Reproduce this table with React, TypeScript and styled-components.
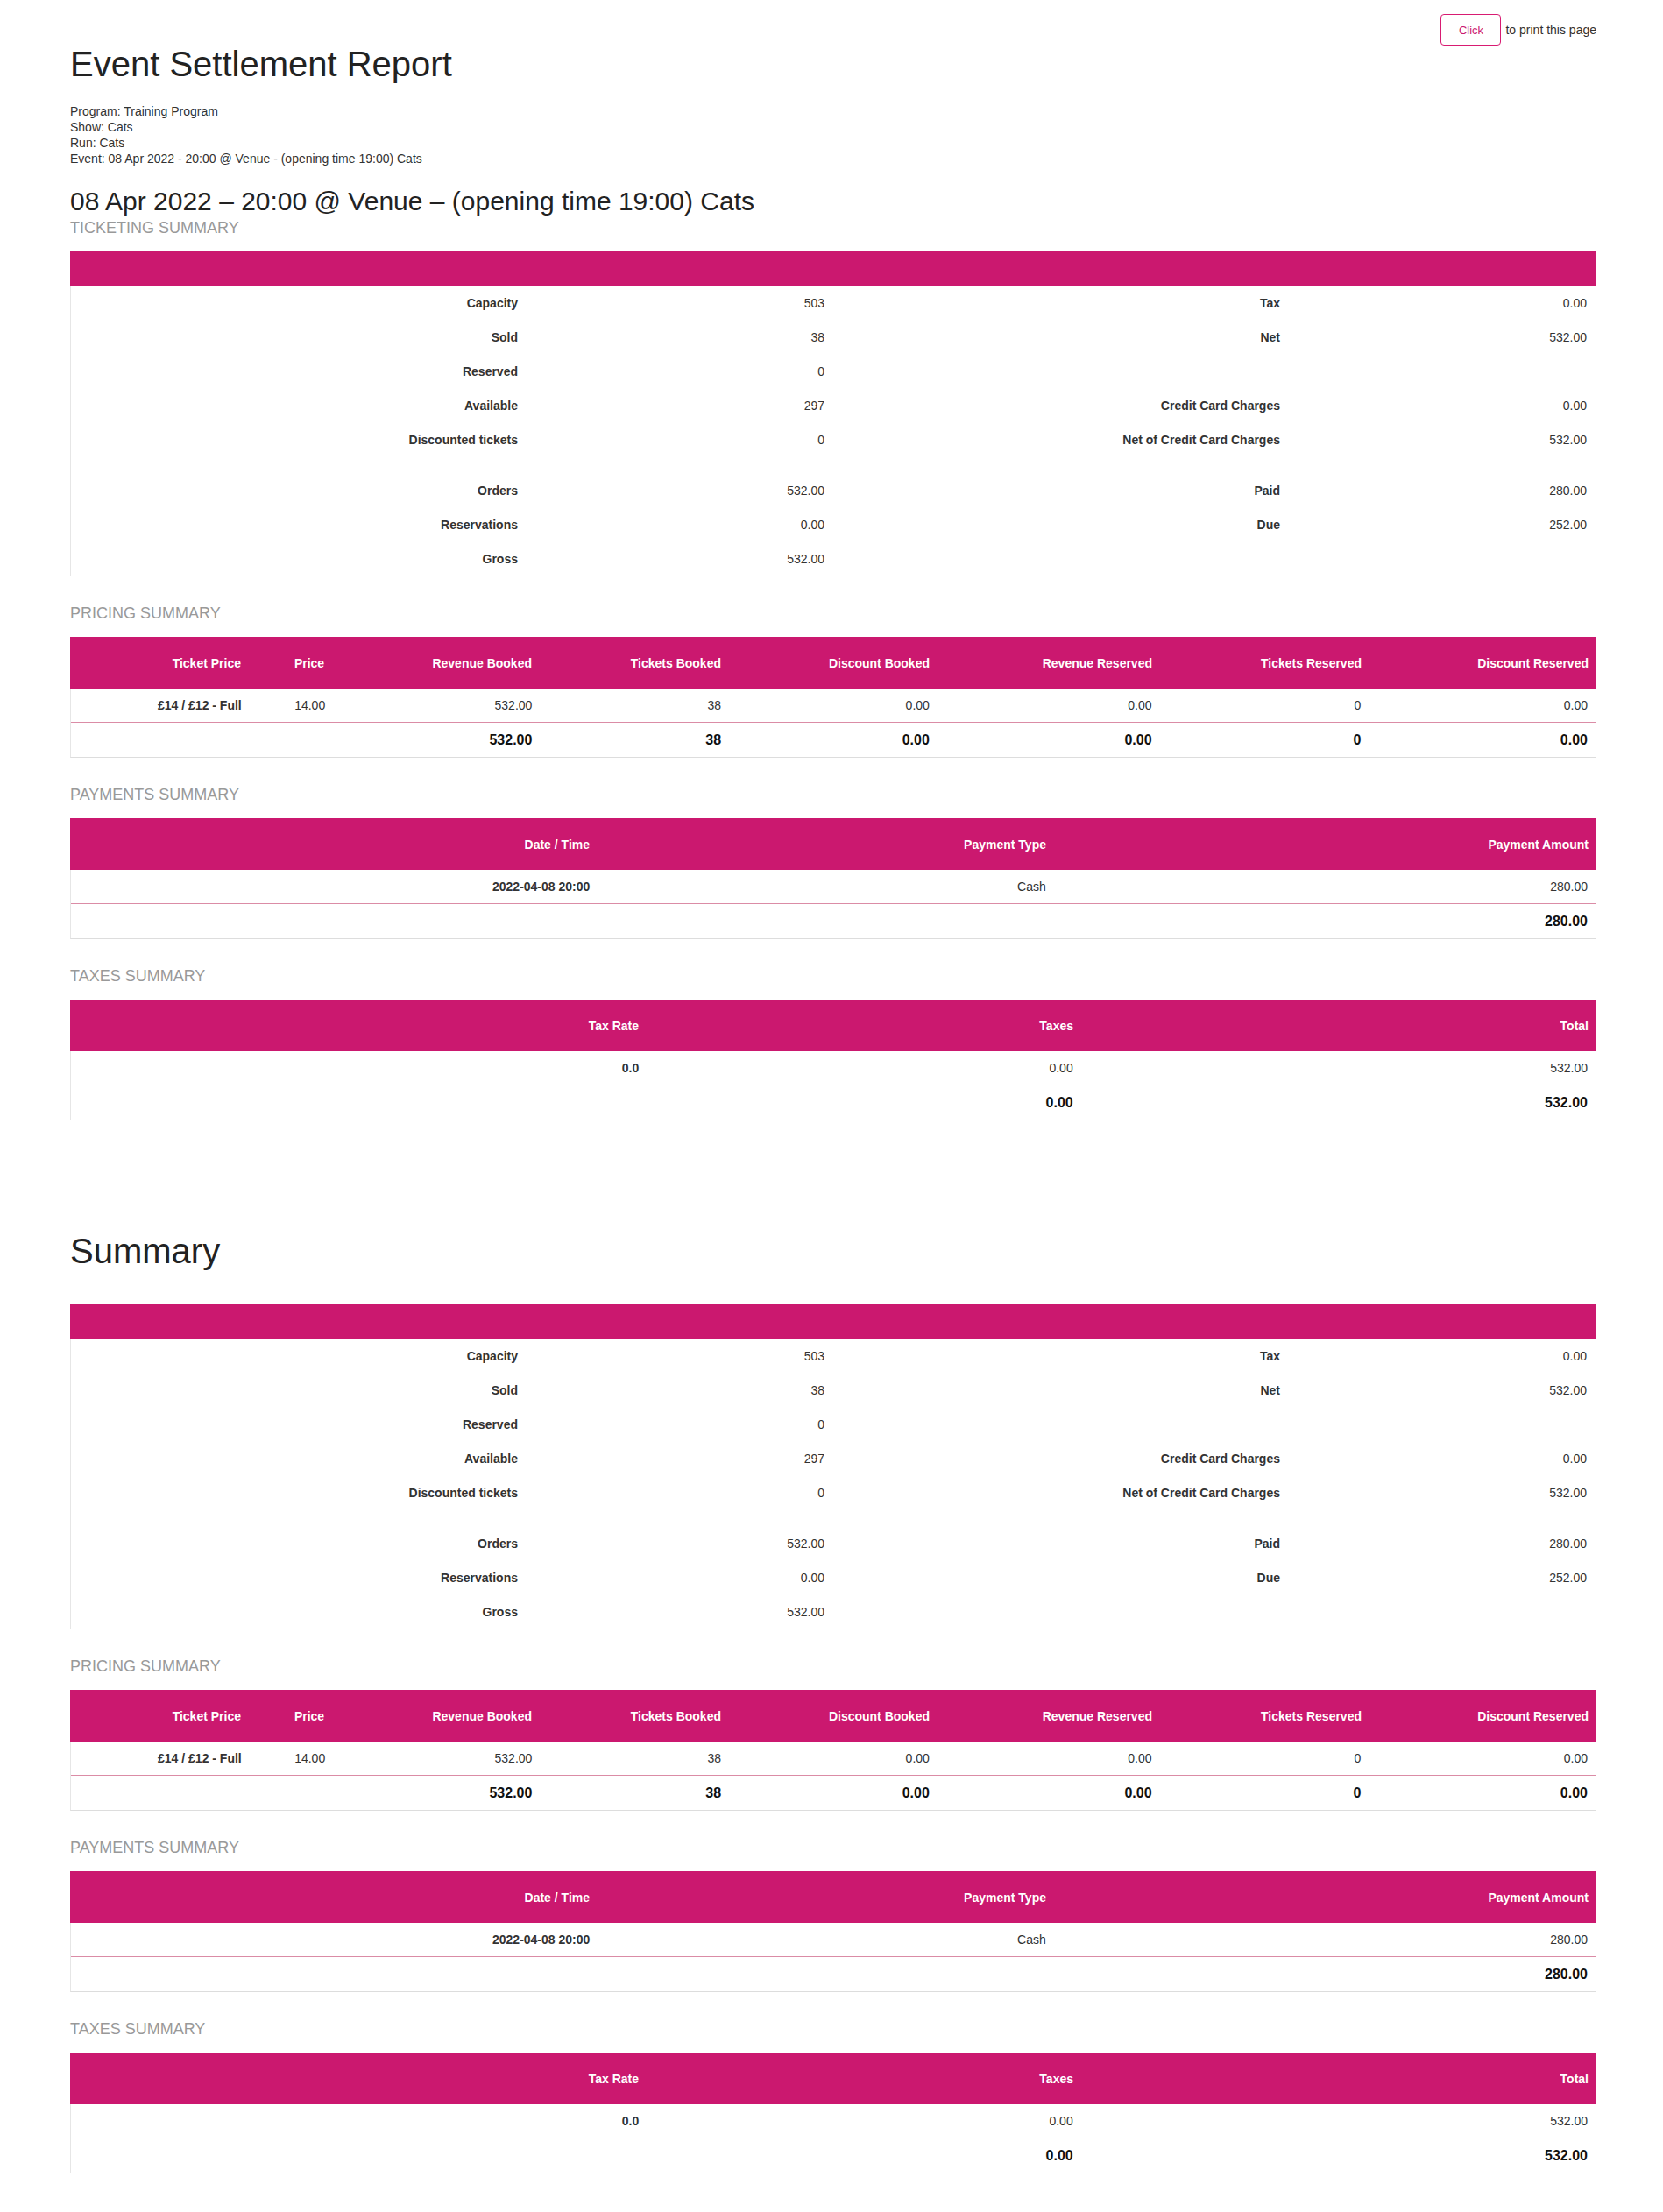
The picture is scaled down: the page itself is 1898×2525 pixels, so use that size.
import React from 'react';
import styled, { createGlobalStyle } from 'styled-components';

const PINK = '#cb186f';

const GlobalStyle = createGlobalStyle`
  html, body { margin: 0; padding: 0; background: #fff; }
  body {
    font-family: "Liberation Sans", Arial, Helvetica, sans-serif;
    color: #333;
    font-size: 14px;
  }
  * { box-sizing: border-box; }
`;

const Page = styled.main`
  width: 1742px;
  margin-left: 80px;
  padding: 16px 0 46px;
`;

const PrintBar = styled.div`
  display: flex;
  justify-content: flex-end;
  align-items: center;
  gap: 5px;
  height: 36px;
`;

const PrintButton = styled.button`
  width: 69px;
  height: 36px;
  border: 1px solid #d81b72;
  border-radius: 4px;
  background: #fff;
  color: ${PINK};
  font-family: inherit;
  font-size: 13px;
  padding: 0;
  cursor: pointer;
`;

const PrintNote = styled.span`
  font-size: 14px;
  color: #333;
`;

const Title = styled.h1<{ $spaced?: boolean }>`
  margin: ${(p) => (p.$spaced ? '128px 0 39px' : '0')};
  font-size: 40px;
  line-height: 42px;
  font-weight: 400;
  color: #222;
`;

const Meta = styled.div`
  margin-top: 24px;
  font-size: 14px;
  line-height: 18px;
  color: #333;
`;

const EventHeading = styled.h2`
  margin: 23px 0 0;
  font-size: 30px;
  line-height: 33px;
  font-weight: 400;
  color: #222;
`;

const SectionLabel = styled.h3<{ $first?: boolean }>`
  margin: ${(p) => (p.$first ? '4px 0 16px' : '32px 0 17px')};
  font-size: 18px;
  line-height: 20px;
  font-weight: 400;
  color: #999;
  text-transform: uppercase;
`;

/* Ticketing summary */
const StatsBar = styled.div`
  height: 40px;
  background: ${PINK};
`;

const StatsBody = styled.div`
  border: 1px solid #e6e6e6;
  border-top: none;
  border-bottom-color: #dddddd;
`;

const StatRow = styled.div<{ $gap?: boolean }>`
  display: grid;
  grid-template-columns: 3fr 2fr 3fr 2fr;
  align-items: center;
  height: ${(p) => (p.$gap ? '19px' : '39px')};
`;

const StatCell = styled.div<{ $label?: boolean }>`
  text-align: right;
  padding-right: ${(p) => (p.$label ? '12px' : '10px')};
  font-size: 14px;
  font-weight: ${(p) => (p.$label ? 700 : 400)};
  color: #333;
`;

/* Generic data tables */
const HeaderRow = styled.div<{ $cols: string }>`
  display: grid;
  grid-template-columns: ${(p) => p.$cols};
  align-items: center;
  height: 59px;
  background: ${PINK};
  color: #fff;
  font-size: 14px;
  font-weight: 700;
`;

const TableBody = styled.div`
  border: 1px solid #e6e6e6;
  border-top: none;
  border-bottom-color: #dddddd;
`;

const DataRow = styled.div<{ $cols: string }>`
  display: grid;
  grid-template-columns: ${(p) => p.$cols};
  align-items: center;
  height: 39px;
  border-bottom: 1px solid #db8ca6;
  font-size: 14px;
  color: #333;
`;

const TotalRow = styled.div<{ $cols: string }>`
  display: grid;
  grid-template-columns: ${(p) => p.$cols};
  align-items: center;
  height: 39px;
  font-size: 16px;
  font-weight: 700;
  color: #111;
`;

type Align = 'left' | 'right' | 'center';

const Cell = styled.div<{ $align: Align; $strong?: boolean }>`
  text-align: ${(p) => p.$align};
  padding: 0 9px;
  white-space: nowrap;
  font-weight: ${(p) => (p.$strong ? 700 : 'inherit')};
`;

interface TableSpec {
  label: string;
  cols: string;
  align: Align[];
  head: string[];
  row: string[];
  total: string[];
}

const tables: TableSpec[] = [
  {
    label: 'Pricing Summary',
    cols: '204fr 138fr 194fr 216fr 238fr 254fr 239fr 259fr',
    align: ['right', 'center', 'right', 'right', 'right', 'right', 'right', 'right'],
    head: [
      'Ticket Price',
      'Price',
      'Revenue Booked',
      'Tickets Booked',
      'Discount Booked',
      'Revenue Reserved',
      'Tickets Reserved',
      'Discount Reserved',
    ],
    row: ['£14 / £12 - Full', '14.00', '532.00', '38', '0.00', '0.00', '0', '0.00'],
    total: ['', '', '532.00', '38', '0.00', '0.00', '0', '0.00'],
  },
  {
    label: 'Payments Summary',
    cols: '602fr 521fr 619fr',
    align: ['right', 'right', 'right'],
    head: ['Date / Time', 'Payment Type', 'Payment Amount'],
    row: ['2022-04-08 20:00', 'Cash', '280.00'],
    total: ['', '', '280.00'],
  },
  {
    label: 'Taxes Summary',
    cols: '658fr 496fr 588fr',
    align: ['right', 'right', 'right'],
    head: ['Tax Rate', 'Taxes', 'Total'],
    row: ['0.0', '0.00', '532.00'],
    total: ['', '0.00', '532.00'],
  },
];

type Stat = [string, string] | null;
type StatLine = { left: Stat; right: Stat } | 'gap';

const stats: StatLine[] = [
  { left: ['Capacity', '503'], right: ['Tax', '0.00'] },
  { left: ['Sold', '38'], right: ['Net', '532.00'] },
  { left: ['Reserved', '0'], right: null },
  { left: ['Available', '297'], right: ['Credit Card Charges', '0.00'] },
  { left: ['Discounted tickets', '0'], right: ['Net of Credit Card Charges', '532.00'] },
  'gap',
  { left: ['Orders', '532.00'], right: ['Paid', '280.00'] },
  { left: ['Reservations', '0.00'], right: ['Due', '252.00'] },
  { left: ['Gross', '532.00'], right: null },
];

function StatPair({ stat }: { stat: Stat }) {
  return (
    <>
      <StatCell $label>{stat ? stat[0] : ''}</StatCell>
      <StatCell>{stat ? stat[1] : ''}</StatCell>
    </>
  );
}

function TicketingSummary() {
  return (
    <div>
      <StatsBar />
      <StatsBody>
        {stats.map((line, i) =>
          line === 'gap' ? (
            <StatRow key={i} $gap />
          ) : (
            <StatRow key={i}>
              <StatPair stat={line.left} />
              <StatPair stat={line.right} />
            </StatRow>
          )
        )}
      </StatsBody>
    </div>
  );
}

function SummaryTable({ spec }: { spec: TableSpec }) {
  return (
    <>
      <SectionLabel>{spec.label}</SectionLabel>
      <div>
        <HeaderRow $cols={spec.cols}>
          {spec.head.map((h, i) => (
            <Cell key={i} $align={spec.align[i]}>
              {h}
            </Cell>
          ))}
        </HeaderRow>
        <TableBody>
          <DataRow $cols={spec.cols}>
            {spec.row.map((c, i) => (
              <Cell key={i} $align={spec.align[i]} $strong={i === 0}>
                {c}
              </Cell>
            ))}
          </DataRow>
          <TotalRow $cols={spec.cols}>
            {spec.total.map((c, i) => (
              <Cell key={i} $align={spec.align[i]}>
                {c}
              </Cell>
            ))}
          </TotalRow>
        </TableBody>
      </div>
    </>
  );
}

function ReportBlock() {
  return (
    <>
      <TicketingSummary />
      {tables.map((t) => (
        <SummaryTable key={t.label} spec={t} />
      ))}
    </>
  );
}

export default function App() {
  return (
    <>
      <GlobalStyle />
      <Page>
        <PrintBar>
          <PrintButton type="button">Click</PrintButton>
          <PrintNote>to print this page</PrintNote>
        </PrintBar>
        <Title>Event Settlement Report</Title>
        <Meta>
          <div>Program: Training Program</div>
          <div>Show: Cats</div>
          <div>Run: Cats</div>
          <div>Event: 08 Apr 2022 - 20:00 @ Venue - (opening time 19:00) Cats</div>
        </Meta>
        <EventHeading>08 Apr 2022 – 20:00 @ Venue – (opening time 19:00) Cats</EventHeading>
        <SectionLabel $first>Ticketing Summary</SectionLabel>
        <ReportBlock />
        <Title $spaced>Summary</Title>
        <ReportBlock />
      </Page>
    </>
  );
}
